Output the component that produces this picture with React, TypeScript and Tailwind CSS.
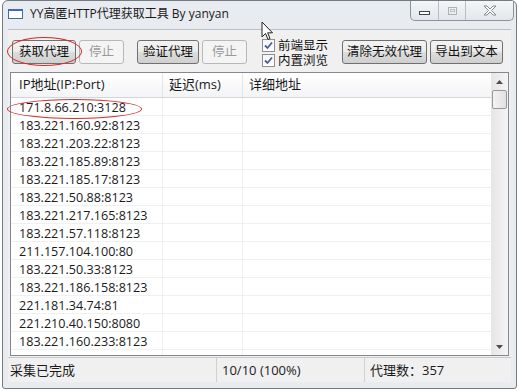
import React from 'react';

const rows = [
  '171.8.66.210:3128',
  '183.221.160.92:8123',
  '183.221.203.22:8123',
  '183.221.185.89:8123',
  '183.221.185.17:8123',
  '183.221.50.88:8123',
  '183.221.217.165:8123',
  '183.221.57.118:8123',
  '211.157.104.100:80',
  '183.221.50.33:8123',
  '183.221.186.158:8123',
  '221.181.34.74:81',
  '221.210.40.150:8080',
  '183.221.160.233:8123',
  '183.221.185.96:8123',
];

const font = { fontFamily: "'Open Sans','Noto Sans CJK SC',sans-serif" };

const WinButton: React.FC<{ label: string; w: string; disabled?: boolean }> = ({ label, w, disabled }) => (
  <div
    className={`${w} h-[24px] flex items-center justify-center rounded-[3px] border text-[12.5px] whitespace-nowrap ${
      disabled
        ? 'border-[#b5b9bc] bg-[#f4f4f4] text-[#9a9a9a]'
        : 'border-[#707070] bg-[linear-gradient(#f3f3f3_0%,#ebebeb_48%,#dcdcdc_52%,#cfcfcf_100%)] text-[#111]'
    }`}
  >
    {label}
  </div>
);

const CheckBox: React.FC<{ label: string }> = ({ label }) => (
  <div className="flex items-center gap-[3px] h-[15px]">
    <div className="w-[13px] h-[13px] shrink-0 border border-[#8e8f8f] bg-[linear-gradient(#f4f4f4,#ffffff)] flex items-center justify-center">
      <svg width="9" height="9" viewBox="0 0 9 9">
        <path d="M1 4.5 L3.5 7 L8 1.5" fill="none" stroke="#4a5f97" strokeWidth="1.8" />
      </svg>
    </div>
    <span className="text-[12.5px] text-[#111] leading-[15px] whitespace-nowrap">{label}</span>
  </div>
);

const App: React.FC = () => {
  return (
    <div className="w-[519px] h-[391px] bg-white relative overflow-hidden" style={font}>
      {/* window */}
      <div className="ml-[2px] w-[515px] h-[389px] rounded-t-[6px] rounded-b-[3px] border border-[#727a82] bg-[#e8ecf0] flex flex-col">
        {/* title bar */}
        <div className="h-[28px] flex items-start">
          <div className="flex items-center h-[26px] pl-[5px] gap-[7px]">
            <div className="w-[15px] h-[10px] border border-[#3d6bb3] border-t-[2px] bg-white" />
            <span className="text-[12px] text-[#1a1a1a]">YY高匿HTTP代理获取工具 By yanyan</span>
          </div>
          <div className="ml-auto mr-[2px] flex h-[20px] border border-t-0 border-[#8c939b] rounded-b-[5px] bg-[linear-gradient(#f4f6f8,#e3e7eb)] overflow-hidden">
            <div className="w-[28px] flex items-center justify-center border-r border-[#b9bfc6]">
              <div className="w-[11px] h-[4px] border border-[#444] bg-white mt-[4px]" />
            </div>
            <div className="w-[27px] flex items-center justify-center border-r border-[#b9bfc6]">
              <div className="w-[9px] h-[8px] border border-[#b0b0b0] flex items-center justify-center">
                <div className="w-[5px] h-[3px] border border-[#c0c0c0]" />
              </div>
            </div>
            <div className="w-[47px] flex items-center justify-center">
              <svg width="14" height="11" viewBox="0 0 14 11">
                <path d="M1 1 L4 1 L7 4 L10 1 L13 1 L8.5 5.5 L13 10 L10 10 L7 7 L4 10 L1 10 L5.5 5.5 Z" fill="#fff" stroke="#8a8a8a" strokeWidth="1" />
              </svg>
            </div>
          </div>
        </div>

        {/* client area */}
        <div className="mx-[5px] h-[353px] bg-[#f0f0f0] border-t border-[#b8c0c8] flex flex-col">
          {/* toolbar */}
          <div className="h-[42px] flex items-start pt-[10px] pl-[4px]">
            <WinButton label="获取代理" w="w-[64px]" />
            <div className="w-[3px]" />
            <WinButton label="停止" w="w-[45px]" disabled />
            <div className="w-[13px]" />
            <WinButton label="验证代理" w="w-[62px]" />
            <div className="w-[3px]" />
            <WinButton label="停止" w="w-[45px]" disabled />
            <div className="w-[15px]" />
            <div className="w-[80px] flex flex-col mt-[-2px]">
              <CheckBox label="前端显示" />
              <CheckBox label="内置浏览" />
            </div>
            <WinButton label="清除无效代理" w="w-[85px]" />
            <div className="w-[3px]" />
            <WinButton label="导出到文本" w="w-[73px]" />
          </div>

          {/* list view */}
          <div className="mx-[2px] h-[284px] border border-[#828790] bg-white flex overflow-hidden">
            <div className="flex-1 flex flex-col overflow-hidden">
              <div className="h-[25px] shrink-0 flex border-b border-[#d5d5d5] bg-[linear-gradient(#ffffff,#f3f4f6)] text-[13px] text-[#1a1a1a]">
                <div className="w-[152px] pl-[8px] flex items-center border-r border-[#e3e5e8]">IP地址(IP:Port)</div>
                <div className="w-[80px] pl-[6px] flex items-center border-r border-[#e3e5e8]">延迟(ms)</div>
                <div className="flex-1 pl-[6px] flex items-center">详细地址</div>
              </div>
              {rows.map((ip, i) => (
                <div key={i} className="h-[18px] shrink-0 flex border-b border-[#f0f0f0] text-[12.6px] text-[#1a1a1a]">
                  <div className="w-[152px] pl-[8px] border-r border-[#f0f0f0] leading-[19px] whitespace-nowrap">{ip}</div>
                  <div className="w-[80px] border-r border-[#f0f0f0]" />
                  <div className="flex-1" />
                </div>
              ))}
            </div>
            {/* scrollbar */}
            <div className="w-[17px] flex flex-col bg-[linear-gradient(90deg,#e6e6e6,#f4f4f4)]">
              <div className="h-[17px] flex items-center justify-center">
                <svg width="7" height="4" viewBox="0 0 7 4"><path d="M0 4 L3.5 0 L7 4 Z" fill="#4d4d4d" /></svg>
              </div>
              <div className="mx-[1px] h-[19px] rounded-[2px] border border-[#989898] bg-[linear-gradient(90deg,#f3f3f3,#e1e1e1)]" />
              <div className="flex-1" />
              <div className="h-[17px] flex items-center justify-center">
                <svg width="7" height="4" viewBox="0 0 7 4"><path d="M0 0 L7 0 L3.5 4 Z" fill="#4d4d4d" /></svg>
              </div>
            </div>
          </div>

          {/* status bar */}
          <div className="mt-[1px] h-[25px] flex items-center border-t border-[#c9c9c9] bg-[#f0f0f0] text-[13px] text-[#1a1a1a]">
            <div className="w-[209px] pl-[2px] h-full flex items-center pt-[2px] border-r border-[#d0d0d0]">采集已完成</div>
            <div className="w-[148px] pl-[5px] h-full flex items-center pt-[2px] border-r border-[#d0d0d0]">10/10 (100%)</div>
            <div className="flex-1 pl-[5px] h-full flex items-center pt-[2px]">代理数：357</div>
          </div>
        </div>
      </div>

      {/* red annotation ellipses */}
      <div className="absolute left-[7px] top-[37px] w-[75px] h-[29px] rounded-[50%] border border-[#d62a2a]" />
      <div className="absolute left-[7px] top-[99px] w-[135px] h-[20px] rounded-[50%] border border-[#d62a2a]" />

      {/* mouse cursor */}
      <svg className="absolute left-[261px] top-[21px]" width="13" height="21" viewBox="0 0 13 21">
        <path d="M1 1 L1 16 L4.5 12.5 L7 18.5 L9 17.5 L6.7 11.8 L11.5 11.8 Z" fill="#fff" stroke="#222" strokeWidth="1" strokeLinejoin="round" />
      </svg>
    </div>
  );
};

export default App;
